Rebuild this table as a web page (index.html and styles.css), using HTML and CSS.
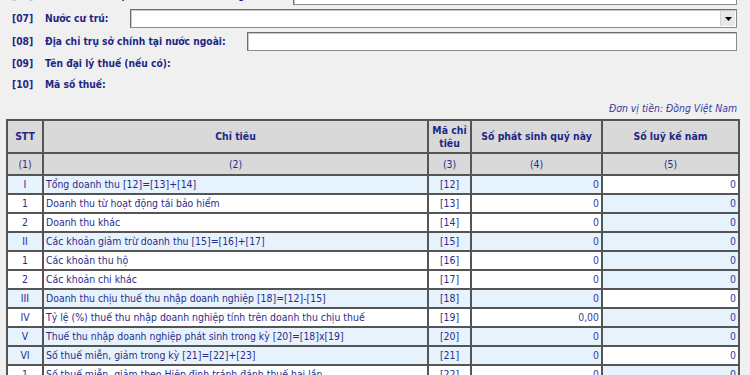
FILE: index.html
```html
<!DOCTYPE html>
<html lang="vi">
<head>
<meta charset="utf-8">
<title>Tờ khai</title>
<link rel="stylesheet" href="styles.css">
</head>
<body>
<div class="page">
  <div class="form">
    <div class="frow">
      <span class="code">[06]</span><span class="lbl lbl-06">Tên tổ chức nhận tái bảo hiểm nước ngoài:</span>
      <div class="input"></div>
    </div>
    <div class="frow">
      <span class="code">[07]</span><span class="lbl lbl-07">Nước cư trú:</span>
      <div class="input select"><span class="arrow"><svg width="7" height="4" viewBox="0 0 7 4"><path d="M0 0H7L3.5 4Z" fill="#000"/></svg></span></div>
    </div>
    <div class="frow">
      <span class="code">[08]</span><span class="lbl lbl-08">Địa chỉ trụ sở chính tại nước ngoài:</span>
      <div class="input"></div>
    </div>
    <div class="frow text">
      <span class="code">[09]</span><span class="lbl">Tên đại lý thuế (nếu có):</span>
    </div>
    <div class="frow text">
      <span class="code">[10]</span><span class="lbl">Mã số thuế:</span>
    </div>
  </div>
  <div class="unit">Đơn vị tiền: Đồng Việt Nam</div>
  <table class="grid">
    <colgroup>
      <col class="c1"><col class="c2"><col class="c3"><col class="c4"><col class="c5">
    </colgroup>
    <thead>
      <tr class="head">
        <th>STT</th><th>Chỉ tiêu</th><th>Mã chỉ<br>tiêu</th><th>Số phát sinh quý này</th><th>Số luỹ kế năm</th>
      </tr>
      <tr class="sub">
        <td>(1)</td><td>(2)</td><td>(3)</td><td>(4)</td><td>(5)</td>
      </tr>
    </thead>
    <tbody>
      <tr class="calc"><td class="stt">I</td><td>Tổng doanh thu [12]=[13]+[14]</td><td class="ma">[12]</td><td class="num ro">0</td><td class="num">0</td></tr>
      <tr><td class="stt">1</td><td>Doanh thu từ hoạt động tái bảo hiểm</td><td class="ma">[13]</td><td class="num">0</td><td class="num ro">0</td></tr>
      <tr><td class="stt">2</td><td>Doanh thu khác</td><td class="ma">[14]</td><td class="num">0</td><td class="num ro">0</td></tr>
      <tr class="calc"><td class="stt">II</td><td>Các khoản giảm trừ doanh thu [15]=[16]+[17]</td><td class="ma">[15]</td><td class="num ro">0</td><td class="num ro">0</td></tr>
      <tr><td class="stt">1</td><td>Các khoản thu hộ</td><td class="ma">[16]</td><td class="num">0</td><td class="num ro">0</td></tr>
      <tr><td class="stt">2</td><td>Các khoản chi khác</td><td class="ma">[17]</td><td class="num">0</td><td class="num ro">0</td></tr>
      <tr class="calc"><td class="stt">III</td><td>Doanh thu chịu thuế thu nhập doanh nghiệp [18]=[12]-[15]</td><td class="ma">[18]</td><td class="num ro">0</td><td class="num">0</td></tr>
      <tr><td class="stt">IV</td><td>Tỷ lệ (%) thuế thu nhập doanh nghiệp tính trên doanh thu chịu thuế</td><td class="ma">[19]</td><td class="num">0,00</td><td class="num ro">0</td></tr>
      <tr class="calc"><td class="stt">V</td><td>Thuế thu nhập doanh nghiệp phát sinh trong kỳ [20]=[18]x[19]</td><td class="ma">[20]</td><td class="num ro">0</td><td class="num ro">0</td></tr>
      <tr class="calc"><td class="stt">VI</td><td>Số thuế miễn, giảm trong kỳ [21]=[22]+[23]</td><td class="ma">[21]</td><td class="num ro">0</td><td class="num">0</td></tr>
      <tr><td class="stt">1</td><td>Số thuế miễn, giảm theo Hiệp định tránh đánh thuế hai lần</td><td class="ma">[22]</td><td class="num">0</td><td class="num ro">0</td></tr>
    </tbody>
  </table>
</div>
</body>
</html>
```

FILE: styles.css
```css
html, body {
  margin: 0;
  padding: 0;
  background: #f0f0f0;
  overflow: hidden;
}
body {
  font-family: "DejaVu Sans Condensed", "DejaVu Sans", sans-serif;
  font-stretch: condensed;
  font-size: 10.4px;
  color: #2b2b8c;
}
.page {
  padding: 0 12px 0 6px;
  margin-top: -14px;
}
.form {
  display: flex;
  flex-direction: column;
  gap: 4px;
  padding-left: 6px;
  padding-right: 1px;
}
.frow {
  display: flex;
  align-items: center;
  height: 19px;
  font-weight: bold;
  font-size: 10.2px;
  color: #1f2785;
}
.frow.text {
  height: 17px;
}
.code {
  width: 33px;
  flex: none;
}
.lbl {
  flex: none;
  white-space: nowrap;
}
.lbl-06 { width: 248px; }
.lbl-07 { width: 85px; }
.lbl-08 { width: 202px; }
.input {
  flex: 1;
  height: 19px;
  box-sizing: border-box;
  background: #fff;
  border: 1px solid #8a8a8a;
  border-top-color: #6e6e6e;
  border-left-color: #6e6e6e;
  box-shadow: inset 1px 1px 0 #c8c8c8;
  position: relative;
}
.select .arrow {
  position: absolute;
  right: 1px;
  top: 1px;
  bottom: 1px;
  width: 14px;
  background: #e8e8e8;
  border-left: 1px solid #d4d4d4;
  display: flex;
  align-items: center;
  justify-content: center;
}
.unit {
  margin-top: 8px;
  text-align: right;
  font-style: italic;
  line-height: 14px;
  color: #3a3a9c;
  padding-right: 1px;
}
.grid {
  margin-top: 4px;
  width: 732px;
  table-layout: fixed;
  border-collapse: separate;
  border-spacing: 0;
  border: 1px solid #555;
}
.c1 { width: 36px; }
.c2 { width: 385px; }
.c3 { width: 43px; }
.c4 { width: 131px; }
.c5 { width: 137px; }
.grid th, .grid td {
  border: 1px solid #555;
  padding: 1px 2px;
  line-height: 15px;
  white-space: nowrap;
  overflow: hidden;
  background: #fff;
}
.grid th {
  background: #d9d9d9;
  color: #1f2785;
  font-weight: bold;
  height: 29px;
  line-height: 13px;
  padding: 1px 2px;
}
.grid .sub td {
  background: #d9d9d9;
  text-align: center;
  height: 18px;
  color: #2b2b8c;
}
.grid .calc td {
  background: #e6f2fc;
}
.grid td.stt, .grid td.ma {
  text-align: center;
}
.grid td.num {
  text-align: right;
  color: #3a3aa0;
}
.grid td.ro {
  background: #e6f2fc;
}
.grid .calc td.num:not(.ro) {
  background: #fff;
}
```
